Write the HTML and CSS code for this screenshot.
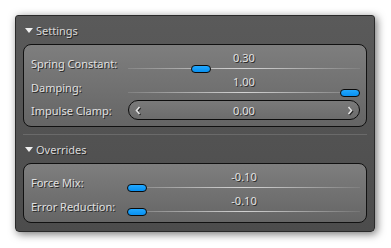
FILE: index.html
```html
<!DOCTYPE html>
<html>
<head>
<meta charset="utf-8">
<link rel="stylesheet" href="styles.css">
</head>
<body>
<div class="panel">
  <div class="header"><span class="tri"></span><span class="title">Settings</span></div>
  <div class="group">
    <div class="row">
      <div class="label">Spring Constant:</div>
      <div class="slider">
        <div class="value">0.30</div>
        <div class="track"><div class="line"></div><div class="handle" style="left:63px"></div></div>
      </div>
    </div>
    <div class="row">
      <div class="label">Damping:</div>
      <div class="slider">
        <div class="value">1.00</div>
        <div class="track"><div class="line"></div><div class="handle" style="left:212px"></div></div>
      </div>
    </div>
    <div class="row spinrow">
      <div class="label">Impulse Clamp:</div>
      <div class="spin">
        <svg class="arrow" width="6" height="9" viewBox="0 0 6 9"><path d="M4.5 1 L1.5 4.5 L4.5 8" fill="none" stroke="#e4e4e4" stroke-width="1.6"/></svg>
        <span class="spinval">0.00</span>
        <svg class="arrow" width="6" height="9" viewBox="0 0 6 9"><path d="M1.5 1 L4.5 4.5 L1.5 8" fill="none" stroke="#e4e4e4" stroke-width="1.6"/></svg>
      </div>
    </div>
  </div>
  <div class="sep"></div>
  <div class="header"><span class="tri"></span><span class="title">Overrides</span></div>
  <div class="group group2">
    <div class="row">
      <div class="label">Force Mix:</div>
      <div class="slider">
        <div class="value">-0.10</div>
        <div class="track"><div class="line"></div><div class="handle" style="left:-1px"></div></div>
      </div>
    </div>
    <div class="row">
      <div class="label">Error Reduction:</div>
      <div class="slider">
        <div class="value">-0.10</div>
        <div class="track"><div class="line"></div><div class="handle" style="left:-1px"></div></div>
      </div>
    </div>
  </div>
</div>
</body>
</html>
```
FILE: styles.css
```css
html, body {
  margin: 0;
  padding: 0;
  background: #ffffff;
}
body {
  width: 391px;
  height: 248px;
  overflow: hidden;
  font-family: "Noto Sans", "Open Sans", sans-serif;
  font-size: 11px;
  color: #dcdcdc;
}
.panel {
  margin: 15px 0 0 15px;
  width: 344px;
  padding: 0 7px 8px 7px;
  border: 1px solid #2a2a2a;
  border-radius: 3px 3px 4px 4px;
  background: linear-gradient(#5a5a5a, #4c4c4c);
  box-shadow: 2px 2px 8px rgba(0,0,0,0.55);
}
.header {
  height: 28px;
  display: flex;
  align-items: center;
  padding-left: 2px;
}
.tri {
  width: 0;
  height: 0;
  border-left: 4px solid transparent;
  border-right: 4px solid transparent;
  border-top: 5px solid #f0f0f0;
  margin-right: 3px;
  margin-top: 1px;
}
.title {
  text-shadow: 1px 1px 0 #262626;
  color: #d8d8d8;
}
.label, .value, .spinval {
  text-shadow: 1px 1px 0 #2a2a2a;
}
.group {
  border: 1px solid #111;
  border-radius: 8px;
  background: linear-gradient(#7e7e7e, #656565);
  padding: 6px 6px 6px 7px;
  display: flex;
  flex-direction: column;
}
.group2 {
  padding-bottom: 4px;
}
.row {
  display: grid;
  grid-template-columns: 97px 1fr;
  align-items: center;
  height: 24px;
}
.spinrow {
  height: 20px;
  margin-top: 1px;
}
.label {
  color: #e0e0e0;
}
.slider {
  display: flex;
  flex-direction: column;
  height: 24px;
}
.value {
  height: 14px;
  line-height: 14px;
  text-align: center;
  color: #e2e2e2;
}
.track {
  position: relative;
  height: 8px;
}
.line {
  position: absolute;
  left: 0;
  right: 0;
  top: 3px;
  height: 1px;
  background: linear-gradient(to right, rgba(255,255,255,0.12), rgba(255,255,255,0.7) 50%, rgba(255,255,255,0.08));
}
.handle {
  position: absolute;
  top: 0;
  width: 18px;
  height: 6px;
  border: 1px solid #0a0a0a;
  border-radius: 4px;
  background: linear-gradient(#22a8ff, #0890f0);
}
.spin {
  height: 18px;
  border: 1px solid #0d0d0d;
  border-radius: 10px;
  background: linear-gradient(#7a7a7a, #6c6c6c);
  display: flex;
  align-items: center;
  justify-content: space-between;
  padding: 0 6px 0 6px;
}
.arrow {
  display: block;
  filter: drop-shadow(1px 1px 0 #2a2a2a);
}
.spinval {
  color: #e2e2e2;
}
.sep {
  height: 1px;
  margin-top: 7px;
  background: #6a6a6a;
}
```
